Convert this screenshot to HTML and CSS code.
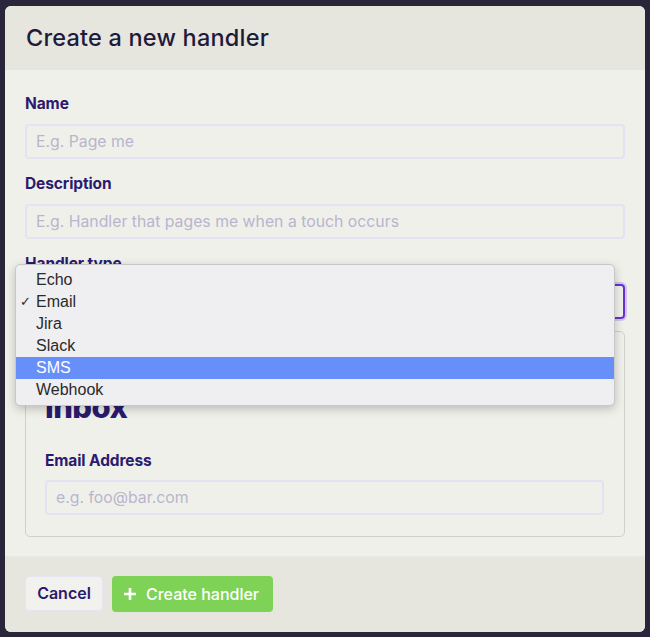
FILE: index.html
```html
<!DOCTYPE html>
<html lang="en">
<head>
<meta charset="utf-8">
<title>Create a new handler</title>
<link rel="stylesheet" href="styles.css">
</head>
<body>
<div class="modal">
  <div class="modal-header">
    <h1 class="title">Create a new handler</h1>
  </div>
  <div class="modal-body">
    <div class="field">
      <label class="label">Name</label>
      <div class="input"><span class="placeholder">E.g. Page me</span></div>
    </div>
    <div class="field">
      <label class="label">Description</label>
      <div class="input"><span class="placeholder">E.g. Handler that pages me when a touch occurs</span></div>
    </div>
    <div class="field field-type">
      <label class="label">Handler type</label>
      <div class="select-wrap">
        <div class="input select-focus"></div>
        <ul class="menu">
          <li class="menu-item">Echo</li>
          <li class="menu-item checked"><span class="check">✓</span>Email</li>
          <li class="menu-item">Jira</li>
          <li class="menu-item">Slack</li>
          <li class="menu-item active">SMS</li>
          <li class="menu-item">Webhook</li>
        </ul>
      </div>
    </div>
    <div class="card">
      <div class="logo-slot"><div class="logo">inbox</div></div>
      <label class="label">Email Address</label>
      <div class="input"><span class="placeholder">e.g. foo@bar.com</span></div>
    </div>
  </div>
  <div class="modal-footer">
    <button class="btn btn-cancel">Cancel</button>
    <button class="btn btn-create">
      <svg class="plus" width="14" height="14" viewBox="0 0 14 14"><path d="M7 1v12M1 7h12" stroke="#fff" stroke-width="2.6" stroke-linecap="butt"/></svg>
      <span>Create handler</span>
    </button>
  </div>
</div>
</body>
</html>
```

FILE: styles.css
```css
* { box-sizing: border-box; }
html, body { margin: 0; }
body {
  background: #29253b;
  padding: 6px 5px 5px 5px;
  font-family: Inter, "Noto Sans", sans-serif;
  width: 650px;
  height: 637px;
  overflow: hidden;
}
.modal {
  width: 640px;
  height: 626px;
  background: #f0f0eb;
  border-radius: 6px;
  display: flex;
  flex-direction: column;
}
.modal-header {
  height: 65px;
  background: #e6e6de;
  border-bottom: 1px solid #e5e1f6;
  border-radius: 6px 6px 0 0;
  display: flex;
  align-items: center;
  padding: 0 21px;
}
.title {
  margin: 0;
  font-size: 23.5px;
  font-weight: 500;
  color: #1e1b3a;
  letter-spacing: 0.2px;
}
.modal-body {
  padding: 24px 20px 19px 20px;
  flex: 1;
}
.field { margin-bottom: 15px; }
.field-type { margin-bottom: 12px; }
.label {
  display: block;
  height: 20px;
  line-height: 20px;
  font-size: 15.5px;
  font-weight: 700;
  color: #2b1a6e;
  margin-bottom: 10px;
  letter-spacing: -0.1px;
}
.input {
  height: 35px;
  border: 2px solid #e4e1f3;
  border-radius: 4px;
  display: flex;
  align-items: center;
  padding: 0 9px;
  font-size: 15.8px;
}
.placeholder { color: #b9b5cd; }
.select-wrap { position: relative; }
.select-focus {
  border-color: #6a2fd2;
  box-shadow: 0 0 0 2px rgba(140, 100, 230, 0.3);
}
.menu {
  position: absolute;
  top: -20px;
  left: -10px;
  width: 600px;
  margin: 0;
  padding: 4px 0;
  list-style: none;
  background: #efeef0;
  border: 1px solid #c9c8c9;
  border-radius: 5px;
  box-shadow: 0 3px 10px rgba(0, 0, 0, 0.22);
  z-index: 10;
}
.menu-item {
  position: relative;
  height: 22px;
  line-height: 22px;
  padding-left: 20px;
  font-family: "Liberation Sans", Arial, sans-serif;
  font-size: 16px;
  color: #2a2a2a;
}
.check {
  position: absolute;
  left: 4px;
  top: 0;
  font-size: 13px;
  font-family: "DejaVu Sans", sans-serif;
}
.menu-item.active {
  background: #668ff9;
  color: #fff;
}
.card {
  border: 1px solid #cfcfcb;
  border-radius: 5px;
  padding: 20px 20px 21px 19px;
}
.logo-slot {
  height: 99px;
  display: flex;
  align-items: flex-end;
}
.logo {
  font-size: 31px;
  line-height: 31px;
  font-weight: 800;
  color: #2b1a6e;
  margin-bottom: 29px;
  letter-spacing: -0.6px;
}
.card .label { margin-bottom: 9px; }
.modal-footer {
  height: 77px;
  background: #e6e6de;
  border-top: 1px solid #e9e9e4;
  border-radius: 0 0 6px 6px;
  display: flex;
  align-items: flex-start;
  gap: 9px;
  padding: 19px 20px 0 20px;
}
.btn {
  height: 36px;
  border-radius: 4px;
  font-family: Inter, "Noto Sans", sans-serif;
  font-size: 16px;
  display: flex;
  align-items: center;
  cursor: pointer;
}
.btn-cancel {
  width: 78px;
  justify-content: center;
  background: #f1f1ee;
  border: 1px solid #e6e3f3;
  color: #2b1a6e;
  font-weight: 600;
  height: 35px;
}
.btn-create {
  width: 161px;
  background: #7ed356;
  border: none;
  color: #fff;
  font-weight: 500;
  padding: 0 0 0 11px;
  gap: 9px;
}
.plus { flex: none; }
```
